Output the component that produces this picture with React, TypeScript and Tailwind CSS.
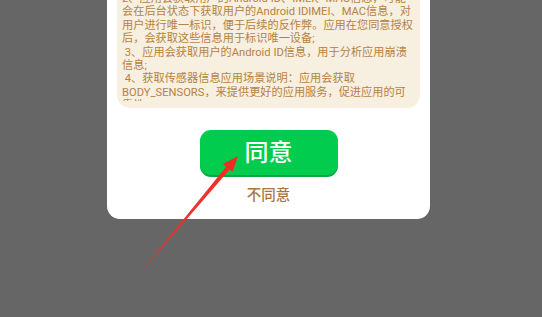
const lines = [
  '2、应用会获取用户的Android ID、IMEI、MAC信息，可能',
  '会在后台状态下获取用户的Android IDIMEI、MAC信息，对',
  '用户进行唯一标识，便于后续的反作弊。应用在您同意授权',
  '后，会获取这些信息用于标识唯一设备;',
  '\u00a03、应用会获取用户的Android ID信息，用于分析应用崩溃',
  '信息;',
  '\u00a04、获取传感器信息应用场景说明：应用会获取',
  'BODY_SENSORS，来提供更好的应用服务，促进应用的可',
  '靠性;',
];

function Arrow() {
  return (
    <svg className="pointer-events-none absolute left-0 top-0" width="542" height="317" viewBox="0 0 542 317">
      <defs>
        <linearGradient id="shaft" x1="136" y1="278" x2="228" y2="168" gradientUnits="userSpaceOnUse">
          <stop offset="0" stopColor="#e5332a" stopOpacity="0.5" />
          <stop offset="0.25" stopColor="#e5332a" stopOpacity="0.95" />
          <stop offset="1" stopColor="#ee2d24" />
        </linearGradient>
      </defs>
      <polygon points="135,279 229.7,169.4 226.3,166.6" fill="url(#shaft)" />
      <polygon points="238,156 232.5,172 223,164" fill="#ee2d24" />
    </svg>
  );
}

export default function App() {
  return (
    <div className="relative h-[317px] w-[542px] overflow-hidden bg-[#666666]" style={{ fontFamily: 'Roboto, "Noto Sans CJK SC", sans-serif' }}>
      <div className="ml-[107px] flex w-[323px] flex-col items-center rounded-b-[13px] bg-white px-[10px] pb-[13px]">
        <div className="h-[108px] w-full rounded-b-[13px] bg-[#f7efdf] pl-[5px] pr-[3px]">
          <div className="h-[101px] overflow-hidden">
            <div className="-mt-[8px] whitespace-nowrap text-[11.2px] leading-[13.4px] text-[#b5823f]">
              {lines.map((l, i) => (
                <div key={i}>{l}</div>
              ))}
            </div>
          </div>
        </div>
        <button className="mt-[22px] flex h-[45px] w-[138px] items-center justify-center rounded-[11px] bg-[#02cc4d] text-[24px] font-medium text-white shadow-[0_2px_0_#0aa640]">
          同意
        </button>
        <div className="mt-[11px] text-[14.5px] font-medium leading-[20px] text-[#a97642]">不同意</div>
      </div>
      <Arrow />
    </div>
  );
}
